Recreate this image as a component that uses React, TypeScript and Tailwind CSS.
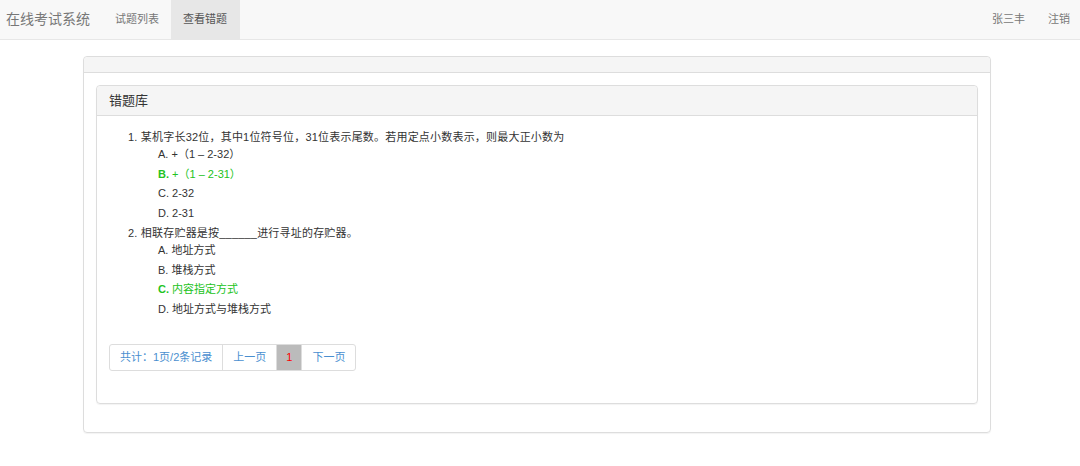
import React from 'react'

const questions = [
  {
    title: '某机字长32位，其中1位符号位，31位表示尾数。若用定点小数表示，则最大正小数为',
    options: ['+（1 – 2-32）', '+（1 – 2-31）', '2-32', '2-31'],
    answer: 1,
  },
  {
    title: '相联存贮器是按______进行寻址的存贮器。',
    options: ['地址方式', '堆栈方式', '内容指定方式', '地址方式与堆栈方式'],
    answer: 2,
  },
]

const letters = ['A', 'B', 'C', 'D']

export default function App() {
  return (
    <div
      className="min-h-[466px] bg-white text-[#333]"
      style={{ fontFamily: '"Liberation Sans", "Noto Sans CJK SC", sans-serif' }}
    >
      {/* Navbar */}
      <nav className="h-[40px] bg-[#f8f8f8] border-b border-[#e7e7e7] flex items-stretch">
        <div className="pl-[6px] pr-[13px] flex items-center text-[14px] text-[#777]">
          在线考试系统
        </div>
        <div className="flex items-stretch text-[11px]">
          <a className="px-[12px] flex items-center text-[#777]">试题列表</a>
          <a className="pl-[12px] pr-[13px] flex items-center text-[#555] bg-[#e7e7e7]">查看错题</a>
        </div>
        <div className="ml-auto flex items-stretch text-[11px] text-[#777]">
          <a className="px-[12px] flex items-center">张三丰</a>
          <a className="pl-[11px] pr-[10px] flex items-center">注销</a>
        </div>
      </nav>

      {/* Outer panel */}
      <div className="ml-[83px] mt-[16px] w-[908px] border border-[#ddd] rounded-[4px] shadow-[0_1px_1px_rgba(0,0,0,0.05)]">
        <div className="h-[16px] bg-[#f5f5f5] border-b border-[#ddd] rounded-t-[4px]" />
        <div className="pt-[12px] px-[12px] pb-[28px]">
          {/* Inner panel */}
          <div className="border border-[#ddd] rounded-[4px] shadow-[0_1px_1px_rgba(0,0,0,0.05)]">
            <div className="h-[30px] bg-[#f5f5f5] border-b border-[#ddd] px-[12px] flex items-center text-[13px] rounded-t-[4px]">
              错题库
            </div>
            <div className="px-[12px] pt-[13px] pb-[32px] text-[11px]">
              <div className="pl-[19px]">
                {questions.map((q, qi) => (
                  <div key={qi} className={qi > 0 ? 'mt-[2px]' : ''}>
                    <div className="leading-[16px] tracking-[0.2px]">
                      {qi + 1}. {q.title}
                    </div>
                    <div className="pl-[30px]">
                      {q.options.map((opt, oi) => (
                        <div
                          key={oi}
                          className={`leading-[19.5px] ${oi === q.answer ? 'text-[#22c322]' : ''}`}
                        >
                          {oi === q.answer ? <b>{letters[oi]}.</b> : <span>{letters[oi]}.</span>} {opt}
                        </div>
                      ))}
                    </div>
                  </div>
                ))}
              </div>

              {/* Pagination */}
              <div className="mt-[25px] inline-flex h-[27px] border border-[#ddd] rounded-[3px] text-[#4a8fd0] overflow-hidden">
                <span className="px-[10px] flex items-center border-r border-[#ddd]">共计：1页/2条记录</span>
                <span className="px-[10px] flex items-center border-r border-[#ddd]">上一页</span>
                <span className="px-[9px] flex items-center bg-[#bbb] text-[#f00] border-r border-[#ddd]">1</span>
                <span className="px-[10px] flex items-center">下一页</span>
              </div>
            </div>
          </div>
        </div>
      </div>
    </div>
  )
}
